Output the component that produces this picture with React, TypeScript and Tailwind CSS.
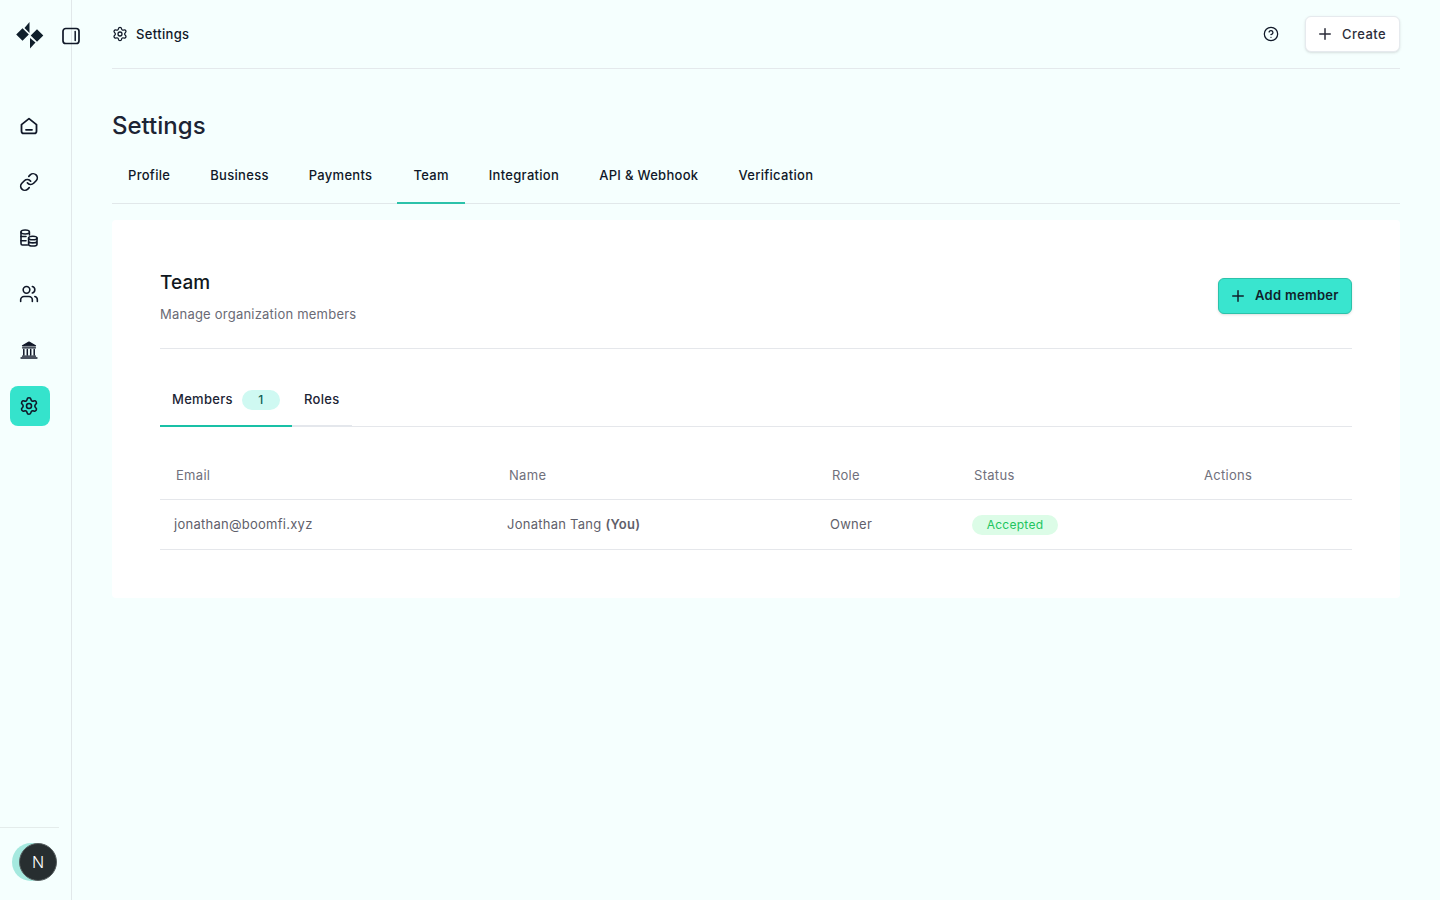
import React from 'react';
import { CircleHelp, Link, Plus, Settings, Users } from 'lucide-react';

const HomeIcon = () => (
  <svg width="20" height="20" viewBox="0 0 20 20" fill="none" stroke="#101828" strokeWidth="1.8" strokeLinecap="round" strokeLinejoin="round">
    <path d="M2.500 8.600 10 2.600l7.500 6v6.600a2.200 2.200 0 0 1-2.200 2.200H4.700a2.200 2.200 0 0 1-2.200-2.200V8.600Z" />
    <path d="M7 13.800h6" />
  </svg>
);

const StackIcon = () => (
  <svg width="20" height="20" viewBox="0 0 20 20" fill="none" stroke="#101828" strokeWidth="1.6" strokeLinecap="round" strokeLinejoin="round">
    <path d="M8.500 17H3.400A1.400 1.400 0 0 1 2 15.600V4c0-1.200 2-2 4.200-2s4.200.8 4.200 2v3" />
    <path d="M2 4c0 1.200 2 2 4.200 2 1.700 0 3.100-.4 3.800-1M2 8.500h5M2 12.800h5" />
    <ellipse cx="13.800" cy="10" rx="4.200" ry="1.800" />
    <path d="M9.600 10v6.200c0 1 1.900 1.800 4.200 1.800s4.200-.8 4.200-1.800V10M9.600 13.100c0 1 1.900 1.800 4.200 1.800s4.200-.8 4.200-1.800" />
  </svg>
);

const BankIcon = () => (
  <svg width="20" height="20" viewBox="0 0 20 20" fill="none" stroke="#101828" strokeWidth="1.500" strokeLinecap="round" strokeLinejoin="round">
    <path d="M10 2 3.500 5.800h13L10 2Z" fill="#101828" strokeWidth="1.200" />
    <path d="M3.500 7.800h13" strokeWidth="1.200" />
    <path d="M4.800 9.500v5.500M8.300 9.500v5.500M11.700 9.500v5.500M15.200 9.500v5.500" />
    <path d="M3.500 16.200h13M2 18h16" strokeWidth="1.300" />
  </svg>
);

const PanelIcon = () => (
  <svg width="18" height="18" viewBox="0 0 18 18" fill="none" stroke="#101828" strokeWidth="1.700" strokeLinecap="round">
    <rect x="1" y="1.500" width="16" height="15" rx="2.800" />
    <path d="M13.200 4.500v9" strokeWidth="1.500" />
  </svg>
);

const Logo = () => (
  <svg width="28" height="28" viewBox="0 0 28 28" fill="#101f2b">
    <path d="M.2 13.500 6.500 7.200l6.300 6.300-6.300 6.300-6.300-6.300Z" />
    <path d="M13.500 1v11l-5-5 5-6Z" />
    <path d="M14.700 14.500 21 8.200l6.300 6.300-6.300 6.300-6.300-6.300Z" />
    <path d="M14 17v10.500l5.500-6L14 17Z" />
  </svg>
);

const navItems = [
  { key: 'home', icon: <HomeIcon /> },
  { key: 'links', icon: <Link size={20} strokeWidth={2} color="#101828" /> },
  { key: 'stack', icon: <StackIcon /> },
  { key: 'users', icon: <Users size={20} strokeWidth={1.9} color="#101828" /> },
  { key: 'bank', icon: <BankIcon /> },
  { key: 'settings', icon: <Settings size={20} strokeWidth={1.9} color="#101828" />, active: true },
];

const tabs = ['Profile', 'Business', 'Payments', 'Team', 'Integration', 'API & Webhook', 'Verification'];

const tableCols = 'grid grid-cols-[333px_323px_142px_230px_1fr] items-center';

export default function App() {
  return (
    <div className="flex min-h-screen bg-[#f5fffe] font-['Inter',sans-serif] text-[#101828]">
      {/* Sidebar */}
      <aside className="relative flex h-[900px] w-[72px] shrink-0 flex-col border-r border-[#e1e8ea]">
        <div className="flex h-[70px] items-center pl-4">
          <Logo />
        </div>
        <button className="absolute left-[62px] top-[27px]">
          <PanelIcon />
        </button>
        <nav className="mt-[36px] flex flex-col items-start gap-4 pl-[10px]">
          {navItems.map((item) => (
            <div
              key={item.key}
              className={`flex h-10 w-10 items-center justify-center rounded-lg pr-[2px] ${item.active ? 'bg-[#35e3cc]' : ''}`}
            >
              {item.icon}
            </div>
          ))}
        </nav>
        <div className="mt-auto w-[59px] border-t border-[#e4eceb] pb-[19px] pl-[19px] pt-[15px]">
          <div className="relative h-[38px] w-[38px]">
            <div className="absolute -left-[7px] top-0 h-[38px] w-[38px] rounded-full bg-[#a5e9df]" />
            <div className="absolute inset-0 flex items-center justify-center rounded-full border border-[#565e5f] bg-[#272e30] text-base font-light text-white">
              N
            </div>
          </div>
        </div>
      </aside>

      {/* Main */}
      <main className="flex-1 px-10">
        <header className="flex h-[69px] items-center justify-between border-b border-[#e4e9ec]">
          <div className="flex items-center gap-2">
            <Settings size={16} strokeWidth={1.9} color="#101828" />
            <span className="pt-px text-[13px] font-medium tracking-[0.35px]">Settings</span>
          </div>
          <div className="flex items-center gap-[26px]">
            <CircleHelp size={16} strokeWidth={1.9} color="#101828" />
            <button className="flex h-9 w-[95px] items-center gap-2 rounded-md border border-[#e6eaee] bg-white pl-[10px] text-[13px] font-medium tracking-[0.45px] text-[#2b2d3a] shadow-sm">
              <Plus size={18} strokeWidth={2} />
              <span className="pt-px">Create</span>
            </button>
          </div>
        </header>

        <h1 className="mt-[41px] text-[24px] font-medium leading-8 text-[#1c2434]">Settings</h1>

        <div className="mt-[6px] flex h-[56px] border-b border-[#e1e8ea]">
          {tabs.map((t) => (
            <div
              key={t}
              className={`-mb-px mr-2 flex items-center whitespace-nowrap border-b-2 px-4 pt-[1px] text-[13px] font-medium tracking-[0.3px] ${t === 'Team' ? 'ml-px border-[#2cc2aa]' : 'border-transparent'}`}
            >
              {t}
            </div>
          ))}
        </div>

        <section className="mt-4 h-[378px] rounded-sm bg-white px-12 pt-[49px]">
          <div className="flex items-center justify-between border-b border-[#e5e7eb] pb-[24px]">
            <div>
              <h2 className="text-[19px] font-medium leading-7 tracking-[0.1px] text-[#0f1720]">Team</h2>
              <p className="mt-[7px] text-[13px] leading-5 tracking-[0.22px] text-[#6a6a75]">Manage organization members</p>
            </div>
            <button className="mb-[2px] flex h-9 w-[134px] items-center gap-2 rounded-md border border-[#2cc2aa] bg-[#39e5cf] pl-[10px] text-[13px] font-semibold tracking-[0.3px] text-[#101f2b] shadow-sm">
              <Plus size={18} strokeWidth={2} />
              <span className="pt-px">Add member</span>
            </button>
          </div>

          <div className="mt-[28px] flex h-[50px] items-stretch border-b border-[#e5e7eb]">
            <div className="-mb-px flex w-[132px] items-center gap-[9px] border-b-2 border-[#19c0a6] px-3 pb-[2px]">
              <span className="text-[13px] font-medium tracking-[0.3px] text-[#1c2434]">Members</span>
              <span className="flex h-5 w-[38px] items-center justify-center rounded-full bg-[#cff9f2] text-xs font-medium text-[#115e52]">1</span>
            </div>
            <div className="-mb-px flex w-[60px] items-center border-b-2 border-[#e4e7ec] px-3 pb-[2px] text-[13px] font-medium tracking-[0.3px] text-[#1c2434]">
              Roles
            </div>
          </div>

          <div className={`${tableCols} mt-6 h-[49px] border-b border-[#e5e7eb] pt-[2px] text-[13px] tracking-[0.3px] text-[#70707c]`}>
            <div className="pl-4">Email</div>
            <div className="pl-4">Name</div>
            <div className="pl-4">Role</div>
            <div className="pl-4">Status</div>
            <div className="pl-4">Actions</div>
          </div>
          <div className={`${tableCols} h-[50px] border-b border-[#e5e7eb] text-[13px] tracking-[0.26px] text-[#5f5f6b]`}>
            <div className="pl-[14px]">jonathan@boomfi.xyz</div>
            <div className="pl-[14px]">
              Jonathan Tang <span className="font-semibold">(You)</span>
            </div>
            <div className="pl-[14px]">Owner</div>
            <div className="pl-[14px]">
              <span className="inline-flex h-5 w-[86px] items-center justify-center rounded-full bg-[#dcfce7] text-xs text-[#22c55e]">Accepted</span>
            </div>
            <div />
          </div>
        </section>
      </main>
    </div>
  );
}
